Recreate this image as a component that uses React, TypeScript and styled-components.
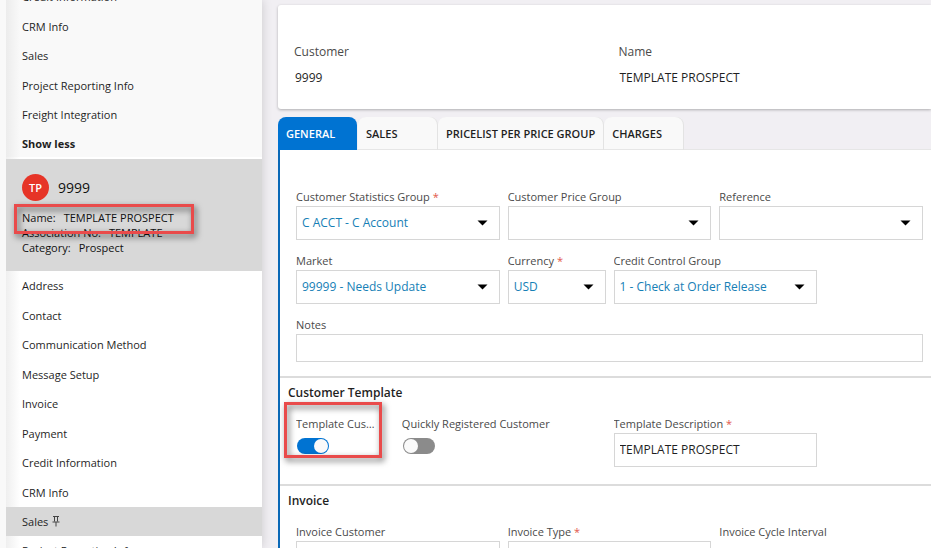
import React, { useId, useState } from "react";
import styled, { createGlobalStyle, css } from "styled-components";

const GlobalStyle = createGlobalStyle`
  *, *::before, *::after { box-sizing: border-box; }
  body {
    margin: 0;
    background: #f1eff3;
    color: #1f1f1f;
    font-family: "Open Sans", "Noto Sans", sans-serif;
    font-size: 12px;
  }
  button, input, select { font: inherit; color: inherit; margin: 0; }
`;

const Page = styled.div`
  display: flex;
  height: 100vh;
  overflow: hidden;
`;

const Sidebar = styled.aside`
  flex: 0 0 262px;
  overflow: hidden;
  border-left: 6px solid #f9f9f9;
  background: linear-gradient(to right, #efefef, #ffffff 14px);
  box-shadow: 0 0 10px rgba(0, 0, 0, 0.16);
`;

const NavList = styled.ul<{ $muted?: boolean }>`
  list-style: none;
  margin: 0;
  padding: 0;
  ${(p) =>
    p.$muted &&
    css`
      margin-top: -18px;
      background: linear-gradient(to right, #ececec, #f9f9f9 14px);
    `}
`;

const NavItem = styled.li`
  display: flex;
  height: 29px;
  &:nth-child(even) {
    height: 30px;
  }
  &:last-child {
    height: 28px;
  }
`;

const NavLink = styled.a<{ $active?: boolean }>`
  flex: 1;
  display: flex;
  align-items: center;
  gap: 4px;
  padding-left: 16px;
  font-size: 11px;
  color: #1f1f1f;
  text-decoration: none;
  background: ${(p) => (p.$active ? "#d8d8d8" : "transparent")};
`;

const ShowLess = styled.button`
  flex: 1;
  padding: 0 0 0 16px;
  border: 0;
  background: none;
  text-align: left;
  font-size: 11px;
  font-weight: 700;
`;

const Record = styled.section`
  margin-top: 2px;
  padding: 15px 16px 16px;
  background: #d8d8d8;
  color: #111;
`;

const RecordHead = styled.div`
  display: flex;
  align-items: center;
  gap: 9px;
  margin-bottom: 9px;
`;

const Avatar = styled.span`
  display: grid;
  place-items: center;
  width: 27px;
  height: 27px;
  border-radius: 50%;
  background: #e63427;
  color: #fff;
  font-size: 11px;
  font-weight: 600;
`;

const RecordId = styled.h2`
  margin: 0;
  font-size: 14px;
  font-weight: 400;
`;

const Facts = styled.dl`
  margin: 0;
  font-size: 11px;
  line-height: 15px;
`;

const Fact = styled.div`
  position: relative;
  display: flex;
  gap: 8px;
  dt, dd { margin: 0; }
`;

const Callout = styled.span`
  position: absolute;
  z-index: 1;
  border: 3px solid #e94b4b;
  filter: drop-shadow(2px 3px 3px rgba(0, 0, 0, 0.6));
  pointer-events: none;
`;

const NameCallout = styled(Callout)`
  top: -6px;
  left: -8px;
  width: 180px;
  height: 30px;
`;

const ToggleCallout = styled(Callout)`
  top: -13px;
  left: -12px;
  right: 12px;
  height: 56px;
`;

const Main = styled.main`
  flex: 1;
  min-width: 0;
  padding: 5px 0 0 16px;
`;

const HeaderCard = styled.section`
  display: grid;
  grid-template-columns: 1fr 1fr;
  column-gap: 12px;
  padding: 38px 0 19px 16px;
  border-radius: 3px 0 0 3px;
  background: #fff;
  box-shadow: 0 1px 3px rgba(0, 0, 0, 0.28);
`;

const HeaderLabel = styled.div`
  line-height: 18px;
  color: #4a4a4a;
`;

const HeaderValue = styled.div`
  padding: 8px 1px 3px;
  font-size: 12px;
  line-height: 18px;
`;

const Tabs = styled.div`
  display: flex;
  gap: 1px;
  margin-top: 8px;
  box-shadow: inset 0 -1px #e6e6e6;
`;

const Tab = styled.button<{ $active: boolean }>`
  min-width: 79px;
  height: 33px;
  padding: 0 8px;
  border: 0;
  border-radius: 8px 8px 0 0;
  text-align: left;
  font-size: 11px;
  font-weight: 600;
  white-space: nowrap;
  background: ${(p) => (p.$active ? "#0073d2" : "#f9f9f9")};
  color: ${(p) => (p.$active ? "#fff" : "#1f1f1f")};
  box-shadow: ${(p) => (p.$active ? "none" : "1px 0 #e3e3e3, inset 0 -1px #e6e6e6")};
`;

const Panel = styled.div`
  border-left: 2px solid #0b69b7;
  background: #fff;
`;

const Section = styled.section<{ $first?: boolean }>`
  padding: ${(p) => (p.$first ? "38px 8px 14px 16px" : "6px 8px 17px 16px")};
  border-bottom: 2px solid #dcdcdc;
`;

const SectionTitle = styled.h3`
  margin: 0 0 13px -8px;
  font-size: 12px;
  font-weight: 600;
  line-height: 18px;
`;

const Grid = styled.div`
  display: grid;
  grid-template-columns: repeat(6, minmax(0, 1fr));
  gap: 12px 8px;
`;

const Field = styled.div<{ $span: number; $start?: number }>`
  position: relative;
  grid-column: ${(p) => (p.$start ? `${p.$start} / ` : "")}span ${(p) => p.$span};
`;

const Label = styled.label<{ $inset?: boolean }>`
  display: block;
  padding-right: ${(p) => (p.$inset ? "16px" : "0")};
  overflow: hidden;
  text-overflow: ellipsis;
  white-space: nowrap;
  line-height: 18px;
  font-size: 11px;
  color: #4a4a4a;
`;

const Required = styled.span`
  color: #e2574c;
`;

const box = css`
  width: 100%;
  border: 1px solid #d6d6d6;
  border-radius: 0;
  background: #fff;
  outline: none;
`;

const SelectWrap = styled.div`
  display: grid;
  align-items: center;
  > * { grid-area: 1 / 1; }
  > svg {
    justify-self: end;
    margin-right: 12px;
    pointer-events: none;
  }
`;

const Select = styled.select`
  ${box}
  appearance: none;
  height: 34px;
  padding: 0 32px 2px 5px;
  font-size: 12px;
  color: #1680b6;
`;

const TextInput = styled.input<{ $short?: boolean }>`
  ${box}
  display: block;
  height: ${(p) => (p.$short ? "28px" : "34px")};
  padding: 0 5px 2px;
  font-size: 12px;
`;

const Switch = styled.input`
  appearance: none;
  display: block;
  width: 32px;
  height: 16px;
  margin: 5px 0 0 1px;
  border-radius: 8px;
  background: #8b8b8b;
  &::before {
    content: "";
    display: block;
    width: 14px;
    height: 14px;
    margin: 1px;
    border-radius: 50%;
    background: #fafafa;
  }
  &:checked { background: #0073d2; }
  &:checked::before { margin-left: 17px; }
`;

function LabelText({ text, required }: { text: string; required?: boolean }) {
  return (
    <>
      {text}
      {required && <Required> *</Required>}
    </>
  );
}

interface FieldProps {
  label: string;
  value?: string;
  span?: number;
  start?: number;
  required?: boolean;
}

function SelectField({ label, value = "", span = 2, required }: FieldProps) {
  const id = useId();
  return (
    <Field $span={span}>
      <Label htmlFor={id}><LabelText text={label} required={required} /></Label>
      <SelectWrap>
        <Select id={id} defaultValue={value}>
          <option value={value}>{value}</option>
        </Select>
        <svg width="11" height="6" viewBox="0 0 11 6" aria-hidden="true">
          <path d="M0.5 0.5h10L5.5 5.5z" fill="#000" />
        </svg>
      </SelectWrap>
    </Field>
  );
}

function TextField({ label, value = "", span = 2, start, required, short }: FieldProps & { short?: boolean }) {
  const id = useId();
  return (
    <Field $span={span} $start={start}>
      <Label htmlFor={id}><LabelText text={label} required={required} /></Label>
      <TextInput id={id} defaultValue={value} $short={short} />
    </Field>
  );
}

function SwitchField({ label, span, on, marked }: { label: string; span: number; on?: boolean; marked?: boolean }) {
  const id = useId();
  return (
    <Field $span={span}>
      <Label htmlFor={id} $inset>{label}</Label>
      <Switch id={id} type="checkbox" role="switch" defaultChecked={on} />
      {marked && <ToggleCallout />}
    </Field>
  );
}

function PinIcon() {
  return (
    <svg width="8" height="11" viewBox="0 0 8 11" fill="none" stroke="#444" aria-hidden="true">
      <path d="M1 .5h6M2.5 .5v5M5.5 .5v5M.5 6h7M4 6v4.5" />
    </svg>
  );
}

const upperNav = ["Credit Information", "CRM Info", "Sales", "Project Reporting Info", "Freight Integration"];
const lowerNav = [
  "Address", "Contact", "Communication Method", "Message Setup", "Invoice", "Payment",
  "Credit Information", "CRM Info", "Sales", "Project Reporting Info",
];
const facts = [
  ["Name:", "TEMPLATE PROSPECT"],
  ["Association No:", "TEMPLATE"],
  ["Category:", "Prospect"],
];
const tabs = ["GENERAL", "SALES", "PRICELIST PER PRICE GROUP", "CHARGES"];

export default function App() {
  const [tab, setTab] = useState(tabs[0]);
  return (
    <Page>
      <GlobalStyle />
      <Sidebar>
        <NavList $muted>
          {upperNav.map((t) => (
            <NavItem key={t}><NavLink href="#">{t}</NavLink></NavItem>
          ))}
          <NavItem><ShowLess type="button">Show less</ShowLess></NavItem>
        </NavList>
        <Record>
          <RecordHead>
            <Avatar>TP</Avatar>
            <RecordId>9999</RecordId>
          </RecordHead>
          <Facts>
            {facts.map(([k, v], i) => (
              <Fact key={k}>
                <dt>{k}</dt>
                <dd>{v}{i === 0 && <NameCallout />}</dd>
              </Fact>
            ))}
          </Facts>
        </Record>
        <NavList>
          {lowerNav.map((t) => (
            <NavItem key={t}>
              <NavLink href="#" $active={t === "Sales"}>
                {t}
                {t === "Sales" && <PinIcon />}
              </NavLink>
            </NavItem>
          ))}
        </NavList>
      </Sidebar>
      <Main>
        <HeaderCard>
          <div>
            <HeaderLabel>Customer</HeaderLabel>
            <HeaderValue>9999</HeaderValue>
          </div>
          <div>
            <HeaderLabel>Name</HeaderLabel>
            <HeaderValue>TEMPLATE PROSPECT</HeaderValue>
          </div>
        </HeaderCard>
        <Tabs role="tablist">
          {tabs.map((t) => (
            <Tab key={t} type="button" role="tab" aria-selected={t === tab} $active={t === tab} onClick={() => setTab(t)}>
              {t}
            </Tab>
          ))}
        </Tabs>
        <Panel role="tabpanel">
          <Section $first>
            <Grid>
              <SelectField label="Customer Statistics Group" value="C ACCT - C Account" required />
              <SelectField label="Customer Price Group" />
              <SelectField label="Reference" />
              <SelectField label="Market" value="99999 - Needs Update" />
              <SelectField label="Currency" value="USD" span={1} required />
              <SelectField label="Credit Control Group" value="1 - Check at Order Release" />
              <TextField label="Notes" span={6} short />
            </Grid>
          </Section>
          <Section>
            <SectionTitle>Customer Template</SectionTitle>
            <Grid>
              <SwitchField label="Template Customer" span={1} on marked />
              <SwitchField label="Quickly Registered Customer" span={2} />
              <TextField label="Template Description" value="TEMPLATE PROSPECT" start={4} required />
            </Grid>
          </Section>
          <Section>
            <SectionTitle>Invoice</SectionTitle>
            <Grid>
              <SelectField label="Invoice Customer" />
              <SelectField label="Invoice Type" required />
              <Field $span={2}><Label as="span">Invoice Cycle Interval</Label></Field>
            </Grid>
          </Section>
        </Panel>
      </Main>
    </Page>
  );
}
